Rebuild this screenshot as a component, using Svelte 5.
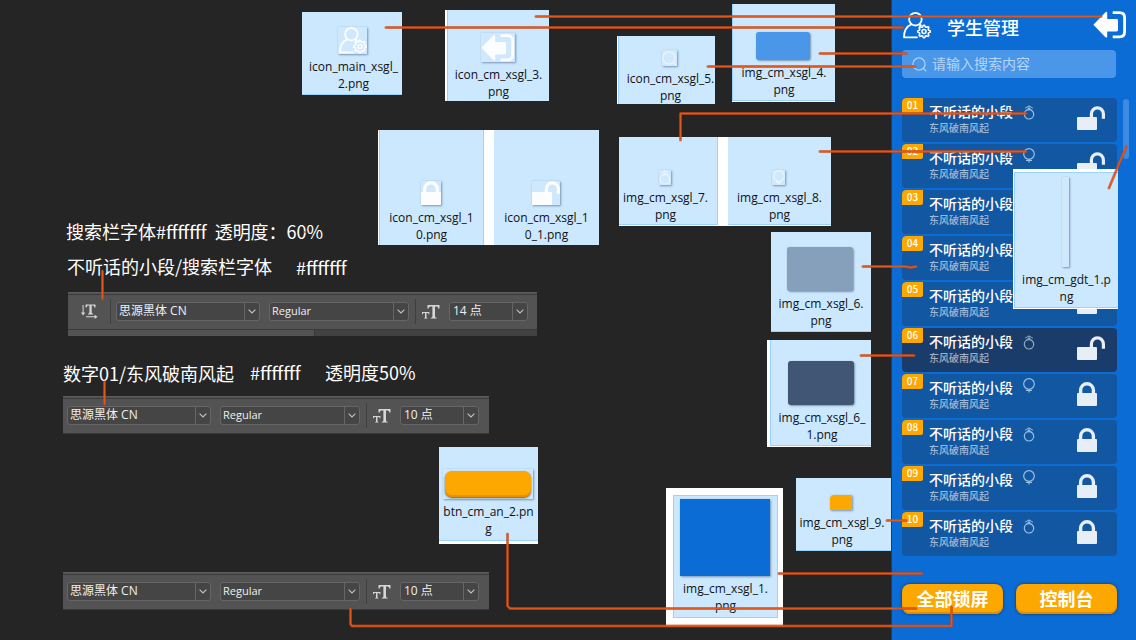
<script>
  const cards = [
    { x: 302, y: 12, w: 100, h: 83, top: 15, left: 3, art: 'user', aw: 29, ah: 27, label: ['icon_main_xsgl_', '2.png'], edge: 'b' },
    { x: 445, y: 10, w: 104, h: 91, top: 23, art: 'exit', aw: 34, ah: 29, label: ['icon_cm_xsgl_3.', 'png'], edge: 'l', wl: 2 },
    { x: 617, y: 36, w: 98, h: 68, top: 14, left: 7, art: 'search', aw: 15, ah: 16, label: ['icon_cm_xsgl_5.', 'png'], edge: 'l', wl: 1 },
    { x: 732, y: 4, w: 103, h: 98, top: 28, art: 'fill', color: '#4a96e9', radius: 3, aw: 54, ah: 28, label: ['img_cm_xsgl_4.', 'png'], edge: 'l b', wb: 1 },
    { x: 378, y: 130, w: 106, h: 115, top: 51, art: 'lock', aw: 20, ah: 24, label: ['icon_cm_xsgl_1', '0.png'], edge: 'l r', wl: 1 },
    { x: 484, y: 130, w: 115, h: 115, top: 51, art: 'unlock', aw: 28, ah: 24, label: ['icon_cm_xsgl_1', '0_1.png'], edge: '', wl: 10 },
    { x: 619, y: 137, w: 99, h: 89, top: 33, right: 5, art: 'male', aw: 12, ah: 15, label: ['img_cm_xsgl_7.', 'png'], edge: 'r b', wb: 1 },
    { x: 718, y: 137, w: 113, h: 89, top: 33, art: 'female', aw: 13, ah: 15, label: ['img_cm_xsgl_8.', 'png'], edge: 'b', wl: 10, wb: 1 },
    { x: 771, y: 232, w: 100, h: 100, top: 15, art: 'fill', color: '#869fbb', radius: 3, aw: 66, ah: 44, label: ['img_cm_xsgl_6.', 'png'], edge: 'b' },
    { x: 767, y: 340, w: 104, h: 107, top: 21, left: 2, art: 'fill', color: '#415575', radius: 3, aw: 66, ah: 44, label: ['img_cm_xsgl_6_', '1.png'], edge: 'l b', wl: 3, wb: 1 },
    { x: 439, y: 447, w: 99, h: 97, top: 22, art: 'button', aw: 90, ah: 30, label: ['btn_cm_an_2.pn', 'g'], edge: 'b', wb: 3 },
    { x: 666, y: 488, w: 117, h: 138, top: 3, art: 'fill', color: '#0b6cd6', radius: 0, aw: 90, ah: 77, label: ['img_cm_xsgl_1.', 'png'], edge: 'l r b t', wl: 7, wr: 5, wt: 7, wb: 8 },
    { x: 796, y: 478, w: 96, h: 73, top: 17, right: 4, art: 'badge', aw: 22, ah: 15, label: ['img_cm_xsgl_9.', 'png'], edge: 'b' }
  ];
  const scrollCard = { w: 105, h: 140, top: 4, art: 'bar', aw: 7, ah: 90, label: ['img_cm_gdt_1.p', 'ng'], edge: 'l t b', wl: 1, wt: 3, wb: 1 };

  const notes = [
    { x: 66, y: 218, text: '搜索栏字体#fffffff  透明度：60%' },
    { x: 67, y: 253, text: '不听话的小段/搜索栏字体' },
    { x: 296, y: 254, text: '#fffffff' },
    { x: 63, y: 360, text: '数字01/东风破南风起' },
    { x: 250, y: 359, text: '#fffffff' },
    { x: 325, y: 359, text: '透明度50%' }
  ];

  const toolbars = [
    { x: 68, y: 292, orient: true, size: '14 点' },
    { x: 63, y: 396, orient: false, size: '10 点' },
    { x: 63, y: 572, orient: false, size: '10 点' }
  ];

  const wires = [
    'M386 27.5H903', 'M536 16.5H1101', 'M820 53.5H906', 'M708 66.5H915',
    'M680.5 140V113.5H1026', 'M820 151.5H1026', 'M1126 147L1109 188',
    'M863 266.5H905L911 267.5L916 266.5', 'M861 355.5H914', 'M887 520.5H906', 'M779 573.5H922',
    'M507.5 534V606L510 608.5H916', 'M350.5 609V624L352 626H951.5V607',
    'M102.5 271V299', 'M104.5 382V404'
  ];

  const males = [0, 2, 3, 5, 7, 9];
  let students = $state(
    Array.from({ length: 10 }, (_, i) => ({
      no: String(i + 1).padStart(2, '0'),
      male: males.includes(i),
      locked: i > 5
    }))
  );
  let selected = $state(5);
  let query = $state('');

  const gear = Array.from({ length: 32 }, (_, i) => {
    const a = ((i - 1.5) / 32) * Math.PI * 2 - Math.PI / 2;
    const r = i % 4 === 1 || i % 4 === 2 ? 6.3 : 4.8;
    return `${(21 + r * Math.cos(a)).toFixed(2)},${(19.5 + r * Math.sin(a)).toFixed(2)}`;
  }).join(' ');
</script>

{#snippet icon(name)}
  {#if name === 'user'}
    <svg width="28" height="27" viewBox="0 0 28 27" fill="none" stroke="currentColor" stroke-width="1.8" stroke-linejoin="round" stroke-linecap="round" aria-hidden="true">
      <circle cx="12.4" cy="7.2" r="6.3" />
      <path d="M8.3 12.4C3.5 14.5 1 18.5 1 25.3H14M16.3 12.6L18 13.4" />
      <polygon points={gear} stroke-width="1.6" />
      <circle cx="21" cy="19.5" r="2" stroke-width="1.6" />
    </svg>
  {:else if name === 'exit'}
    <svg width="34" height="28" viewBox="0 0 34 28" fill="none" aria-hidden="true">
      <path d="M0.4 13.7L12.2 1.4Q14.2 0 14.2 2.2V8H23.6Q25 8 25 9.4V19Q25 20.4 23.6 20.4H14.2V25.4Q14.2 27.4 12.2 26Z" fill="currentColor" />
      <path d="M19.7 1.6H26.5Q31.6 1.6 31.6 6.6V20.8Q31.6 25.8 26.5 25.8H19.7" stroke="currentColor" stroke-width="2.8" />
    </svg>
  {:else if name === 'search'}
    <svg width="15" height="15" viewBox="0 0 15 15" fill="none" stroke="currentColor" stroke-width="1.3" stroke-linecap="round" aria-hidden="true">
      <circle cx="7" cy="7" r="6.1" /><path d="M11.4 11.4L13.8 13.8" />
    </svg>
  {:else if name === 'lock'}
    <svg width="20" height="24" viewBox="0 0 20 24" fill="none" aria-hidden="true">
      <rect y="11" width="20" height="13" rx="1" fill="currentColor" />
      <path d="M3.6 12V8A6.4 6.2 0 0 1 16.4 8V12" stroke="currentColor" stroke-width="3.4" />
    </svg>
  {:else if name === 'unlock'}
    <svg width="28" height="24" viewBox="0 0 28 24" fill="none" aria-hidden="true">
      <rect y="11" width="20" height="13" rx="1" fill="currentColor" />
      <path d="M14.4 12V8A6 6.2 0 0 1 26.4 8V12.8" stroke="currentColor" stroke-width="3.2" />
    </svg>
  {:else if name === 'male'}
    <svg width="12" height="15" viewBox="0 0 12 15" fill="none" stroke="currentColor" stroke-width="1.2" aria-hidden="true">
      <circle cx="6" cy="9.3" r="4.7" /><path d="M2.1 3.2L6 0.9L9.9 3.2M3.4 4.9L6 3.2L8.6 4.9M6 1V4.6" stroke-width="1" />
    </svg>
  {:else if name === 'female'}
    <svg width="12" height="15" viewBox="0 0 12 15" fill="none" stroke="currentColor" stroke-width="1.2" aria-hidden="true">
      <circle cx="6" cy="6" r="5.3" /><path d="M6 11.2V14.4M3 12.5H9" />
    </svg>
  {:else if name === 'chevron'}
    <svg width="8" height="5" viewBox="0 0 8 5" fill="none" stroke="#c4c4c4" stroke-width="1.1" aria-hidden="true"><path d="M0.6 0.6L4 4L7.4 0.6" /></svg>
  {:else if name === 'bigT'}
    <svg width="18" height="14" viewBox="0 0 18 14" fill="#d6d6d6" aria-hidden="true">
      <path d="M5.5 0H17.5V3.4H16.3Q16.2 1.5 14.7 1.5H13V11.4Q13 12.6 14.7 12.7V13.6H8.8V12.7Q10.4 12.6 10.4 11.4V1.5H8.4Q6.8 1.5 6.7 3.4H5.5Z" />
      <path d="M0 7H7.4V9.2H6.6Q6.5 8 5.6 8H4.5V12.3Q4.5 12.9 5.4 13V13.6H2.1V13Q3 12.9 3 12.3V8H1.9Q.9 8 .8 9.2H0Z" />
    </svg>
  {:else if name === 'orient'}
    <svg width="17" height="15" viewBox="0 0 17 15" fill="#d6d6d6" aria-hidden="true">
      <path d="M4.6 0.4H14.5V3.4H13.4Q13.2 1.6 12 1.6H10.7V8.5Q10.7 9.3 12 9.5V10.4H7.1V9.5Q8.4 9.3 8.4 8.5V1.6H7.1Q5.9 1.6 5.7 3.4H4.6Z" />
      <path d="M1.6 1H2.6V8.4H4.2L2.1 11.4L0 8.4H1.6ZM5 12.3H13.6V10.7L16.6 12.8L13.6 14.9V13.3H5Z" />
    </svg>
  {/if}
{/snippet}

{#snippet thumb(c)}
  <div
    class="tile {c.edge.split(' ').filter(Boolean).map((e) => 'edge-' + e).join(' ')}"
    style="padding: {c.top}px {c.right ?? 0}px 0 {c.left ?? 0}px"
  >
    <div class="art art-{c.art}" style="width:{c.aw}px;height:{c.ah}px;background:{c.color ?? ''};border-radius:{c.radius ?? 0}px">
      {#if c.art === 'button'}<span class="pill"></span>
      {:else if c.art === 'badge'}<span class="tag"></span>
      {:else}{@render icon(c.art)}{/if}
    </div>
    <p class="file">{c.label[0]}<br />{c.label[1]}</p>
  </div>
{/snippet}

{#snippet field(cls, name, value)}
  <label class="field {cls}">
    <select aria-label={name}><option>{value}</option></select>
    <span class="arrow">{@render icon('chevron')}</span>
  </label>
{/snippet}

<div class="page">
  <main class="canvas">
    {#each cards as c}
      <figure
        class="card"
        style="left:{c.x}px;top:{c.y}px;width:{c.w}px;height:{c.h}px;padding:{c.wt ?? 0}px {c.wr ?? 0}px {c.wb ?? 0}px {c.wl ?? 0}px"
      >
        {@render thumb(c)}
      </figure>
    {/each}

    {#each notes as n}
      <p class="note" style="left:{n.x}px;top:{n.y}px">{n.text}</p>
    {/each}

    {#each toolbars as t}
      <div class="toolbar" style="left:{t.x}px;top:{t.y}px">
        <div class="tools" class:wide={t.orient}>
          {#if t.orient}
            <span class="glyph orient">{@render icon('orient')}</span>
            <span class="divider"></span>
          {/if}
          {@render field('family', '字体', '思源黑体 CN')}
          {@render field('style', '字形', 'Regular')}
          <span class="divider"></span>
          <span class="glyph">{@render icon('bigT')}</span>
          {@render field('size', '字号', t.size)}
        </div>
        {#if t.orient}<div class="tabs"><span></span></div>{/if}
      </div>
    {/each}
  </main>

  <aside class="panel">
    <header>
      {@render icon('user')}
      <h1>学生管理</h1>
      <button class="plain leave" aria-label="退出">{@render icon('exit')}</button>
    </header>
    <label class="search">
      {@render icon('search')}
      <input type="text" placeholder="请输入搜索内容" aria-label="搜索" bind:value={query} />
    </label>

    <div class="listing">
      <ul>
        {#each students as s, i}
          <li class:active={i === selected}>
            <span class="no">{s.no}</span>
            <div class="who">
              <strong>不听话的小段</strong>
              <small>东风破南风起</small>
            </div>
            <span class="sex" class:female={!s.male}>{@render icon(s.male ? 'male' : 'female')}</span>
            <button class="plain lockbtn" aria-label={s.locked ? '解锁' : '锁屏'} onclick={() => { s.locked = !s.locked; selected = i; }}>
              {@render icon(s.locked ? 'lock' : 'unlock')}
            </button>
          </li>
        {/each}
      </ul>
      <span class="scroll"></span>
    </div>

    <div class="actions">
      <button>全部锁屏</button>
      <button>控制台</button>
    </div>

    <figure class="card over" style="width:{scrollCard.w}px;height:{scrollCard.h}px;padding:{scrollCard.wt}px 0 {scrollCard.wb}px {scrollCard.wl}px">
      {@render thumb(scrollCard)}
    </figure>
  </aside>

  <svg class="wires" aria-hidden="true" fill="none" stroke-linecap="round" stroke-linejoin="round">
    {#each wires as d}
      <path {d} stroke="#c8440f" stroke-opacity="0.65" stroke-width="3" />
      <path {d} stroke="#e4571a" stroke-width="1.4" />
    {/each}
    <circle cx="305" cy="232" r="1" fill="#e4571a" />
  </svg>
</div>

<style>
  :global(body) { background: #252525; }
  .page {
    position: relative;
    display: flex;
    min-height: 100vh;
    overflow: hidden;
    background: #252525;
    font-family: "Noto Sans CJK SC", sans-serif;
    color: #fff;
  }
  .page :global(svg) { display: block; flex: none; }
  .page * { box-sizing: border-box; }
  p, h1, ul, figure { margin: 0; padding: 0; }
  .canvas { position: relative; flex: 1; min-width: 0; }

  .card { position: absolute; background: #fff; overflow: hidden; }
  .tile {
    height: 100%;
    display: flex;
    flex-direction: column;
    align-items: center;
    gap: 4px;
    background: #cce8ff;
    border: 0 solid #99d1ff;
  }
  .edge-l { border-left-width: 1px; }
  .edge-r { border-right-width: 1px; }
  .edge-b { border-bottom-width: 1px; }
  .edge-t { border-top-width: 1px; }
  .art {
    flex: none;
    display: flex;
    align-items: center;
    justify-content: center;
    margin-right: 2px;
    color: rgba(255, 255, 255, 0.9);
    box-shadow: 1px 1px 2px rgba(60, 90, 120, 0.55), 0 0 1px rgba(120, 160, 190, 0.4);
  }
  .art:not(.art-fill) { background: #cfe8fc; }
  .art-search, .art-male, .art-female { color: #eaf5ff; }
  .art-bar { background: #d9edff; border-radius: 2px; }
  .pill {
    width: 86px;
    height: 26px;
    border-radius: 7px;
    background: #fca800;
    box-shadow: inset 0 -2px 1px #e88f00, 0 1px 2px rgba(50, 60, 70, 0.8);
  }
  .tag { width: 22px; height: 15px; border-radius: 4px 1px 1px 1px; background: #fca800; }
  .file {
    font: 12px/17px "Open Sans", "Noto Sans", sans-serif;
    color: #111;
    text-align: center;
    white-space: nowrap;
  }

  .note { position: absolute; font-size: 18px; line-height: 26px; white-space: pre; }

  .toolbar { position: absolute; background: #535353; border-top: 1px solid #5a5a5a; }
  .tools {
    display: flex;
    align-items: center;
    margin-top: 1px;
    border-top: 1px solid #3a3a3a;
    border-bottom: 1px solid #3a3a3a;
    height: 36px;
    padding: 0 10px 1px 4px;
  }
  .tools.wide { padding: 0 9px 1px 13px; }
  .field {
    display: flex;
    height: 19px;
    border: 1px solid #666;
    border-radius: 3px;
    background: #454545;
  }
  .family { width: 144px; }
  .style { width: 140px; margin: 0 6px 0 9px; }
  .size { width: 79px; margin-left: 9px; }
  .field select {
    flex: 1;
    min-width: 0;
    height: 16px;
    appearance: none;
    border: 0;
    background: none;
    padding: 0 0 0 2px;
    color: #f0f0f0;
    font: 11px/16px "Open Sans", "Noto Sans CJK SC", sans-serif;
  }
  .family select { font-size: 12px; }
  .size select { font-size: 12px; padding-left: 3px; }
  .arrow { display: flex; width: 15px; align-items: center; justify-content: center; border-left: 1px solid #666; }
  .divider { width: 1px; height: 25px; background: #3e3e3e; }
  .glyph { margin-left: 6px; }
  .glyph.orient { margin: 0 12px 0 0; }
  .glyph.orient + .divider { margin-right: 5px; }
  .tabs { height: 6px; background: #424242; }
  .tabs span { display: block; width: 247px; height: 6px; background: #535353; border-right: 1px solid #363636; }

  .panel {
    position: relative;
    width: 244px;
    flex: none;
    padding: 0 7px 0 10px;
    background: #0b6cd6;
    box-shadow: -1px 0 0 #173f6e;
  }
  .plain { display: block; padding: 0; border: 0; background: none; color: inherit; cursor: pointer; }
  header { display: flex; align-items: center; height: 50px; padding: 0 2px 0 1px; }
  h1 { margin-left: 16px; padding-top: 4px; font-size: 18px; line-height: 25px; font-weight: 500; }
  .leave { margin-left: auto; }
  .search {
    display: flex;
    align-items: center;
    gap: 5px;
    height: 28px;
    margin-right: 13px;
    padding: 0 10px;
    border-radius: 4px;
    background: #4a97ea;
    color: #a9d0f7;
  }
  .search input {
    flex: 1;
    min-width: 0;
    height: 22px;
    padding: 0 0 2px;
    border: 0;
    outline: 0;
    background: none;
    color: #fff;
    font: 14px/20px "Noto Sans CJK SC", sans-serif;
  }
  .search input::placeholder { color: rgba(255, 255, 255, 0.6); }

  .listing { display: flex; gap: 6px; margin-top: 20px; }
  ul { flex: 1; display: grid; gap: 2px; list-style: none; }
  li {
    display: flex;
    align-items: flex-start;
    height: 44px;
    border-radius: 4px;
    background: #1257a2;
    overflow: hidden;
  }
  li.active { background: #1a3c6b; }
  .no {
    width: 21px;
    height: 15px;
    border-radius: 4px 0 2px 0;
    background: #fca800;
    font-size: 10px;
    line-height: 14px;
    font-weight: 500;
    text-align: center;
  }
  .who { display: flex; flex-direction: column; margin-left: 6px; padding-top: 3px; }
  .who strong { font-size: 14px; line-height: 20px; font-weight: 500; }
  .who small { font-size: 10px; line-height: 14px; font-weight: 500; color: rgba(255, 255, 255, 0.6); }
  .sex { margin: 7px 0 0 10px; color: #9dbfe4; }
  .sex.female { margin-top: 4px; }
  .active .sex { color: #98a8c0; }
  .lockbtn { width: 28px; margin: 8px 12px 0 auto; color: #e7eef7; }
  .scroll { width: 6px; height: 60px; margin-top: 1px; border-radius: 3px; background: #3c8ae2; }

  .actions { display: flex; gap: 13px; margin: 28px 12px 0 0; }
  .actions button {
    flex: 1;
    height: 30px;
    padding: 0 0 2px;
    border: 0;
    border-radius: 8px;
    background: #fca800;
    box-shadow: inset 0 -2px 1px #e38a00, 0 0 3px rgba(20, 40, 70, 0.9);
    color: #fff;
    font: 700 18px/26px "Noto Sans CJK SC", sans-serif;
  }
  .over { left: 121px; top: 169px; }
  .wires { position: absolute; inset: 0; width: 100%; height: 100%; pointer-events: none; }
</style>
